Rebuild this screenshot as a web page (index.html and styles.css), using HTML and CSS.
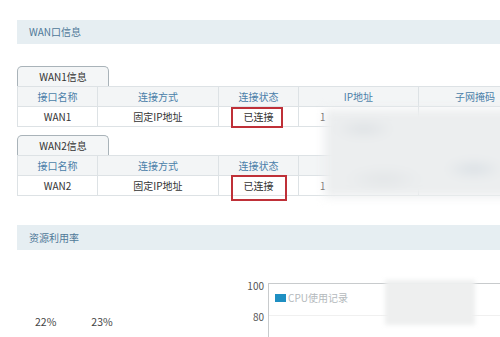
FILE: index.html
```html
<!DOCTYPE html>
<html lang="zh-CN">
<head>
    <meta charset="UTF-8">
    <title>WAN口信息</title>
    <link rel="stylesheet" href="styles.css">
</head>
<body>
    <div class="page">
        <div class="section-title">WAN口信息</div>

        <div class="wan-block first">
            <div class="tab">WAN1信息</div>
            <table class="wan-table">
                <colgroup>
                    <col class="c1"><col class="c2"><col class="c3"><col class="c4"><col class="c5">
                </colgroup>
                <tr>
                    <th>接口名称</th>
                    <th>连接方式</th>
                    <th>连接状态</th>
                    <th>IP地址</th>
                    <th>子网掩码</th>
                </tr>
                <tr>
                    <td>WAN1</td>
                    <td>固定IP地址</td>
                    <td class="status"><span class="mark mark-1"></span>已连接</td>
                    <td class="ip">1</td>
                    <td></td>
                </tr>
            </table>
        </div>

        <div class="wan-block">
            <div class="tab">WAN2信息</div>
            <table class="wan-table">
                <colgroup>
                    <col class="c1"><col class="c2"><col class="c3"><col class="c4"><col class="c5">
                </colgroup>
                <tr>
                    <th>接口名称</th>
                    <th>连接方式</th>
                    <th>连接状态</th>
                    <th>IP地址</th>
                    <th>子网掩码</th>
                </tr>
                <tr>
                    <td>WAN2</td>
                    <td>固定IP地址</td>
                    <td class="status"><span class="mark mark-2"></span>已连接</td>
                    <td class="ip">1</td>
                    <td></td>
                </tr>
            </table>
        </div>

        <!-- blurred addresses -->
        <div class="blur blur-ip"></div>

        <div class="section-title second">资源利用率</div>

        <div class="usage">
            <div class="percents">
                <span>22%</span>
                <span>23%</span>
            </div>
            <div class="chart">
                <div class="axis">
                    <span>100</span>
                    <span>80</span>
                </div>
                <div class="plot">
                    <div class="legend"><i></i>CPU使用记录</div>
                    <div class="grid-line"></div>
                    <div class="blur blur-chart"></div>
                </div>
            </div>
        </div>
    </div>
</body>
</html>
```

FILE: styles.css
```css
html, body {
    margin: 0;
    padding: 0;
    overflow: hidden;
    background-color: #fff;
}
body {
    font-family: "Noto Sans CJK SC", "Noto Sans", sans-serif;
    font-size: 10px;
    color: #333;
}
.page {
    position: relative;
    box-sizing: border-box;
    width: 500px;
    height: 337px;
    overflow: hidden;
    padding: 20px 0 0 17px;
}
.section-title {
    width: 500px;
    height: 24px;
    line-height: 24px;
    padding-left: 12px;
    background-color: #e6eef2;
    color: #4f7898;
}
.section-title.second {
    margin-top: 29px;
    height: 25px;
    line-height: 25px;
}
.wan-block {
    margin-top: 8px;
}
.wan-block.first {
    margin-top: 22px;
}
.tab {
    box-sizing: border-box;
    width: 92px;
    height: 20px;
    line-height: 19px;
    text-align: center;
    background-color: #f4f6f7;
    border: 1px solid #a9b3b9;
    border-bottom: none;
    border-radius: 5px 5px 0 0;
    color: #333;
}
.wan-table {
    border-collapse: collapse;
    table-layout: fixed;
    width: 514px;
}
.wan-table th,
.wan-table td {
    border: 1px solid #dde2e5;
    height: 19px;
    padding: 0;
    text-align: center;
    font-weight: normal;
    white-space: nowrap;
}
.wan-table th {
    background-color: #f3f5f6;
    color: #4a7ea8;
}
.c1 { width: 80px; }
.c2 { width: 121px; }
.c3 { width: 80px; }
.c4 { width: 120px; }
.c5 { width: 113px; }
.wan-table td.ip {
    text-align: left;
    padding-left: 21px;
}
.status {
    position: relative;
}
.mark {
    position: absolute;
    border: 2px solid #bf3038;
    box-sizing: border-box;
}
.mark-1 {
    left: 12px;
    top: 0;
    width: 52px;
    height: 21px;
}
.mark-2 {
    left: 12px;
    top: -1px;
    width: 56px;
    height: 26px;
}
.blur {
    position: absolute;
    background-color: #eceeef;
    filter: blur(5px);
}
.blur-ip {
    left: 324px;
    top: 109px;
    width: 190px;
    height: 88px;
    background-image:
        radial-gradient(ellipse 30px 10px at 40px 20px, #dde1e4, transparent),
        radial-gradient(ellipse 30px 10px at 150px 60px, #d9dfe4, transparent),
        radial-gradient(ellipse 40px 12px at 60px 70px, #e2e5e7, transparent);
}
.usage {
    display: flex;
    align-items: flex-start;
    margin-top: 30px;
}
.percents {
    display: flex;
    gap: 35px;
    padding: 34px 0 0 18px;
    width: 214px;
    font-size: 10.5px;
    color: #444;
}
.chart {
    display: flex;
    flex: 1;
}
.axis {
    display: flex;
    flex-direction: column;
    align-items: flex-end;
    width: 15px;
    padding-right: 4px;
    color: #555;
    font-size: 10px;
    line-height: 12px;
    gap: 19px;
}
.plot {
    position: relative;
    flex: 1;
    height: 60px;
    margin-top: 3px;
    border-top: 1px solid #c8cbcd;
    border-left: 1px solid #c8cbcd;
}
.legend {
    display: flex;
    align-items: center;
    gap: 2px;
    margin: 6px 0 0 6px;
    color: #b4b9bc;
    font-size: 10px;
}
.legend i {
    display: block;
    width: 11px;
    height: 8px;
    background-color: #1f8fc2;
}
.grid-line {
    position: absolute;
    left: 0;
    right: 0;
    top: 31px;
    border-top: 1px solid #f0f0f0;
}
.blur-chart {
    left: 116px;
    top: -4px;
    width: 90px;
    height: 45px;
    filter: blur(2px);
    background-color: #eeefef;
}
```
